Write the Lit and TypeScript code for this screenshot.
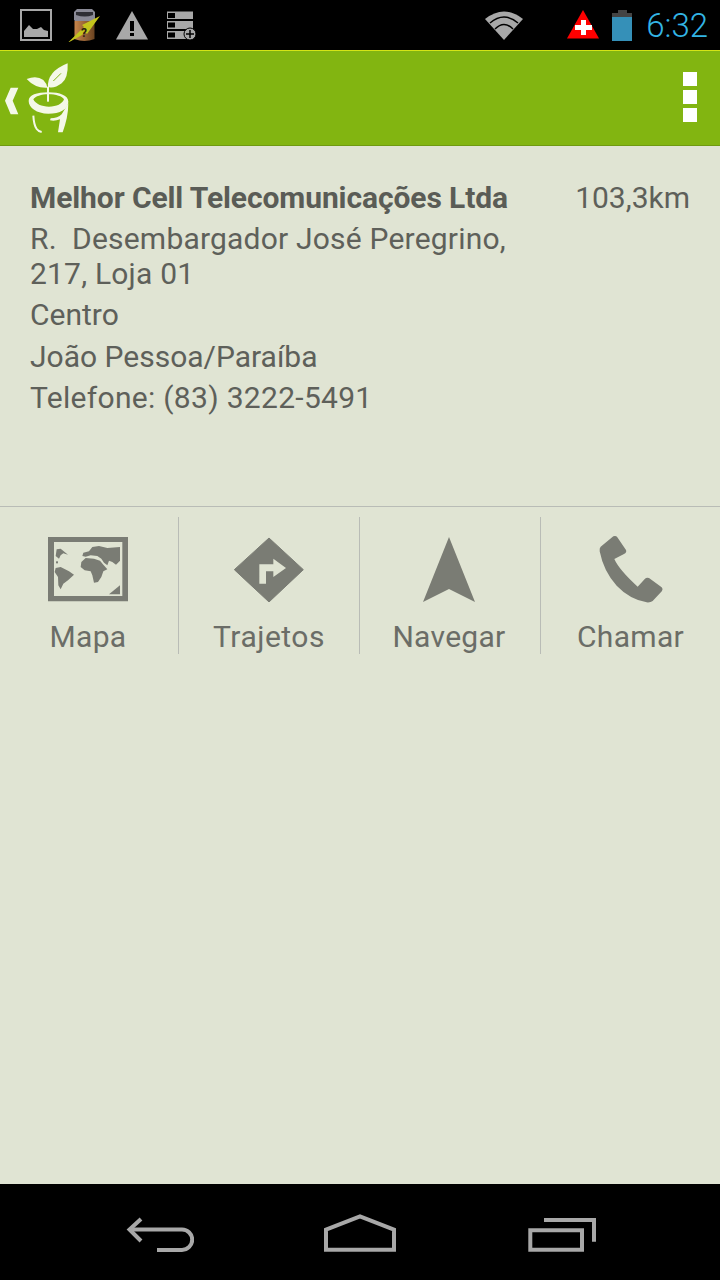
import { LitElement, html, css } from "lit";
import { customElement } from "lit/decorators.js";

@customElement("app-root")
export class AppRoot extends LitElement {
  static styles = css`
    :host { display: flex; flex-direction: column; width: 720px; height: 1280px; background: #e0e4d3; font-family: Roboto, sans-serif; color: #5e605a; overflow: hidden; }
    svg { display: block; flex: none; }
    .status { height: 50px; background: #000; display: flex; align-items: center; flex: none; }
    .status-left { display: flex; align-items: center; gap: 15px; padding-left: 20px; flex: 1; }
    .stack { margin-left: 3px; }
    .status-right { display: flex; align-items: center; padding-right: 12px; }
    .wifi { margin-right: 44px; }
    .battery { margin-left: 12px; margin-right: 14px; }
    .clock { font-size: 33px; font-weight: 300; color: #33b5e5; line-height: 50px; position: relative; top: 1px; }
    .bar { height: 96px; flex: none; box-sizing: border-box; background: #82b511; border-top: 1px solid #d4e417; border-bottom: 1px solid #6f9a10; display: flex; align-items: flex-start; justify-content: space-between; }
    .logo { margin-top: 4px; }
    .menu { display: flex; flex-direction: column; gap: 4px; padding: 21px 23px 0 0; }
    .menu i { display: block; width: 14px; height: 14px; background: #fff; }
    .info { height: 361px; flex: none; box-sizing: border-box; padding: 31px 30px 0; border-bottom: 1px solid #b9bcb6; font-size: 30px; line-height: 41.3px; }
    .head { display: flex; justify-content: space-between; }
    .name { font-weight: 700; letter-spacing: -0.1px; color: #5a5c56; }
    .addr { width: 490px; line-height: 35px; padding: 3px 0; white-space: pre-wrap; letter-spacing: 0.2px; }
    .phone { letter-spacing: 0.3px; }
    .actions { display: grid; grid-template-columns: 179px 181px 181px 179px; padding-top: 10px; flex: none; }
    .act { height: 137px; display: flex; flex-direction: column; align-items: center; box-sizing: border-box; border-right: 1px solid #b9bcb6; font-size: 30px; letter-spacing: 0.3px; color: #6b6d67; }
    .act.nudge { padding-right: 2px; }
    .act.wide { letter-spacing: 0.5px; }
    .act:last-child { border-right: 0; }
    .ico { height: 64px; margin-top: 20px; }
    .ico.up { margin-top: 18px; height: 66px; }
    .lbl { margin-top: 16px; line-height: 40px; }
    .spacer { flex: 1; }
    .nav { height: 96px; flex: none; background: #000; display: flex; align-items: flex-start; padding: 30px 0 0 126px; box-sizing: border-box; }
    .home { margin-left: 130px; }
    .recents { margin-left: 130px; }
  `;

  render() {
    const G = "#7a7c74";
    const W = "#f4f8e8";
    return html`
      <div class="status">
        <div class="status-left">
          <svg width="32" height="33" viewBox="20 9 32 33"><rect x="21" y="10" width="30" height="30" fill="none" stroke="#a8a8a8" stroke-width="2"/><path d="M24 37v-6l5-6 4 4 4 0 4-2 3 3 4 1v6z" fill="#a8a8a8"/></svg>
          <svg width="34" height="34" viewBox="67 8 34 34">
            <defs><linearGradient id="bt"><stop offset="0" stop-color="#c8864c"/><stop offset="1" stop-color="#6a4320"/></linearGradient></defs>
            <path d="M74 12l3-3h15l3 3v8l-2 2H76l-2-2z" fill="#8a8a96"/>
            <path d="M76 12h17v3q-8 3-17 0z" fill="#2e2e34"/>
            <path d="M74.500 21h20v18q-10 4-20 0z" fill="url(#bt)"/>
            <path d="M67.500 43L84 27l-2-2 18-9-13 18-2-2-3 3z" fill="#c4c41c"/>
            <text x="81" y="37" font-size="12" font-family="Roboto" font-weight="700" fill="#2a1d0c">?</text>
          </svg>
          <svg width="33" height="30" viewBox="116 9 33 30"><path d="M132 10L148 38.500H116z" fill="#a8a8a8"/><rect x="130" y="20" width="4" height="10" fill="#000"/><rect x="130" y="32" width="4" height="3" fill="#000"/></svg>
          <svg class="stack" width="30" height="30" viewBox="167 10 30 30"><g fill="#a8a8a8"><rect x="167" y="11.500" width="26" height="7.500"/><rect x="167" y="21" width="26" height="8"/><rect x="167" y="31" width="26" height="8"/></g><g fill="#000"><rect x="168" y="13" width="7" height="5"/><rect x="168" y="22.500" width="7" height="5"/><rect x="168" y="32.500" width="7" height="5"/></g><circle cx="190" cy="34" r="6" fill="#a8a8a8" stroke="#000"/><path d="M190 30v8M186 34h8" stroke="#000" stroke-width="1.500"/></svg>
        </div>
        <div class="status-right">
          <svg class="wifi" width="38" height="30" viewBox="0 0 38 30"><path d="M0 9Q19-6 38 9L19 30z" fill="#a8a8a8"/><g fill="none" stroke="#000" stroke-width="1.500"><path d="M5 13Q19 1 33 13"/><path d="M10 19Q19 10 28 19"/></g></svg>
          <svg width="33" height="30" viewBox="567 12 33 30"><path d="M583 12L599 40.500H567z" fill="#f00"/><path d="M581 22h5v5h6v5h-6v5h-5v-5h-6v-5h6z" fill="#fff"/></svg>
          <svg class="battery" width="20" height="31" viewBox="612 9 20 31"><path d="M618 9h9v3h5v4h-20v-4h6z" fill="#444"/><rect x="612" y="16" width="20" height="24" fill="#3590b8"/></svg>
          <span class="clock">6:32</span>
        </div>
      </div>
      <div class="bar">
        <svg class="logo" width="80" height="85" viewBox="0 0 240 255">
          <path d="M15 137L32 98H55L38 137 55 178H32z" fill="${W}"/>
          <path d="M80 72Q110 60 130 75Q140 85 142 98Q105 100 80 72z" fill="${W}"/>
          <path d="M144 98Q140 50 203 25Q205 70 185 85Q165 100 148 97z" fill="${W}"/>
          <path d="M183 55L160 78" stroke="#82b511" stroke-width="3"/>
          <rect x="141" y="95" width="6" height="45" fill="${W}"/>
          <path fill-rule="evenodd" fill="${W}" d="M86 138C86 120 110 112 145 112C180 112 205 122 205 140C205 162 180 176 145 176C110 176 86 158 86 138zM100 133C106 147 125 155 147 155C170 155 187 147 192 133C187 124 168 118 145 118C124 118 106 124 100 133z"/>
          <path d="M205 145C205 175 198 205 188 232H174L180 193C170 197 160 198 150 196L152 190C165 190 178 186 185 178z" fill="${W}"/>
          <path d="M100 182C101 200 104 214 110 222C114 228 120 230 125 231" fill="none" stroke="${W}" stroke-width="6"/>
        </svg>
        <div class="menu"><i></i><i></i><i></i></div>
      </div>
      <div class="info">
        <div class="head"><span class="name">Melhor Cell Telecomunicações Ltda</span><span>103,3km</span></div>
        <div class="addr">R.  Desembargador José Peregrino, 217, Loja 01</div>
        <div>Centro</div>
        <div>João Pessoa/Paraíba</div>
        <div class="phone">Telefone: (83) 3222-5491</div>
      </div>
      <div class="actions">
        <div class="act nudge"><div class="ico"><svg width="81" height="65" viewBox="12 15 243 195">
          <path fill-rule="evenodd" d="M12 15H252V208H12zM30 30V192H235V30z" fill="${G}"/>
          <path fill="${G}" d="M118 62L135 58 145 45 165 42 190 48 228 45V86L216 98 205 90 195 86 190 100 180 92 172 80 160 72 140 70 125 74 115 72z"/>
          <path fill="${G}" d="M112 90L125 78 150 80 168 86 178 98 190 112 178 118 172 135 162 150 150 152 145 130 140 118 122 115 110 105z"/>
          <path fill="${G}" d="M38 52L50 50 72 68 58 64 50 70 45 80 35 72z"/>
          <rect x="36" y="88" width="6" height="6" fill="${G}"/>
          <path fill="${G}" d="M35 108L50 105 75 118 90 128 72 145 58 155 50 172 43 160 42 135 32 120z"/>
          <path fill="${G}" d="M195 187L228 160V187z"/>
        </svg></div><span class="lbl">Mapa</span></div>
        <div class="act wide"><div class="ico"><svg width="70" height="65" viewBox="702 110 210 195">
          <path d="M807 113L910 208 807 305 703 208z" fill="${G}" stroke="${G}" stroke-width="3" stroke-linejoin="round"/>
          <path d="M778 250V192H820V175L858 203 820 230V213H798V250z" fill="#e0e4d3"/>
        </svg></div><span class="lbl">Trajetos</span></div>
        <div class="act nudge"><div class="ico"><svg width="54" height="65" viewBox="0 0 54 65">
          <path d="M27 0L53 65 27 52 1 65z" fill="${G}"/>
        </svg></div><span class="lbl">Navegar</span></div>
        <div class="act"><div class="ico up"><svg width="66" height="68" viewBox="716 103 198 204">
          <path d="M724 138L762 107q8-3 12 3l26 38q3 8-6 12l-29 15q14 32 70 83l22-24q5-5 12-2l38 28q5 5 1 11l-28 30q-6 5-18 4Q810 295 772 255 733 213 721 152q-1-10 3-14z" fill="${G}"/>
        </svg></div><span class="lbl">Chamar</span></div>
      </div>
      <div class="spacer"></div>
      <div class="nav">
        <svg width="68" height="40" viewBox="126 1214 68 40" fill="none" stroke="#a8a8a8" stroke-width="4"><path d="M141 1219L129.500 1229.500 141 1241"/><path d="M130 1229.500H182a10.200 10.200 0 0 1 0 20.400H157"/></svg>
        <svg class="home" width="72" height="40" viewBox="324 1214 72 40" fill="none" stroke="#a8a8a8" stroke-width="4"><path d="M326 1229.700L360 1216.500 394 1229.700V1249.700H326z"/></svg>
        <svg class="recents" width="70" height="40" viewBox="526 1214 70 40" fill="none" stroke="#a8a8a8" stroke-width="4"><path d="M544 1220H594V1241.700"/><path d="M530.300 1230.300H582V1249.700H530.300z"/></svg>
      </div>
    `;
  }
}
